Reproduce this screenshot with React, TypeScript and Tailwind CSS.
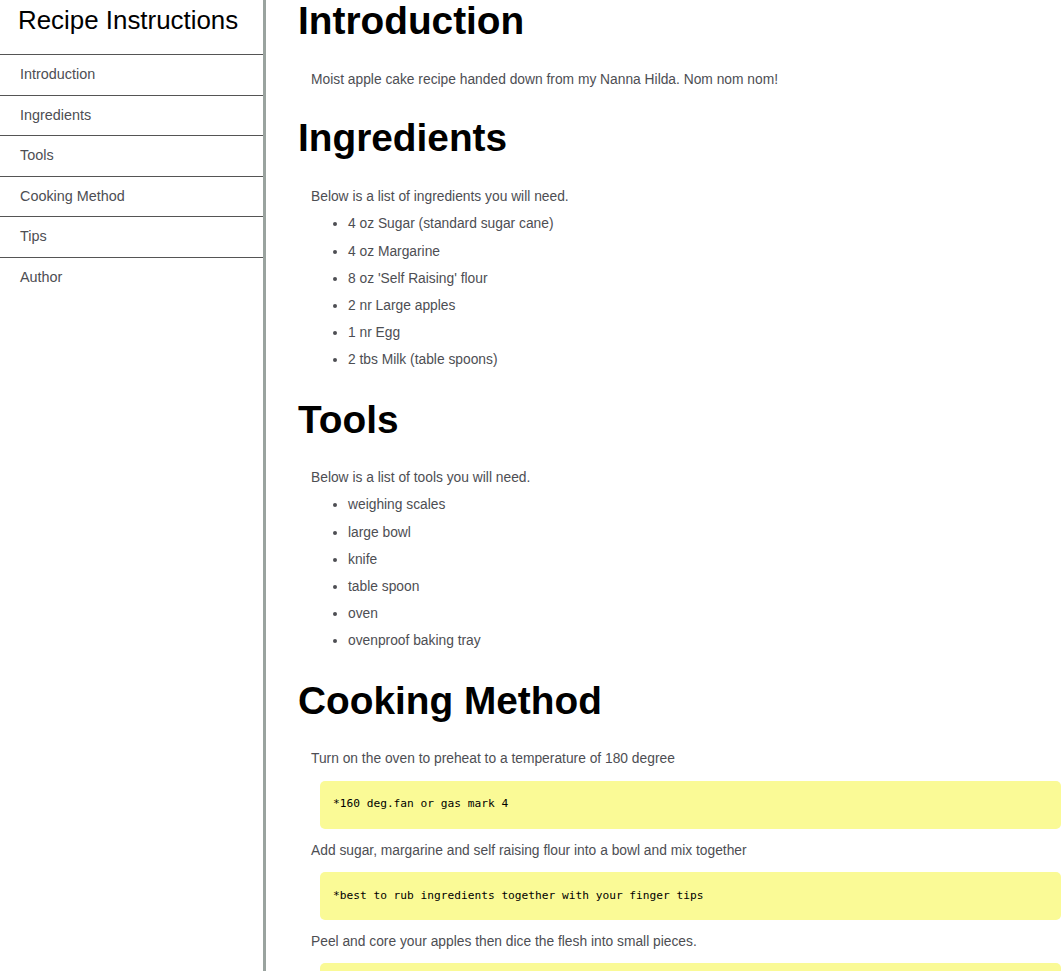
import React from 'react';

const navItems = ['Introduction', 'Ingredients', 'Tools', 'Cooking Method', 'Tips', 'Author'];

const Heading: React.FC<{ children: React.ReactNode }> = ({ children }) => (
  <h1 className="text-[38.8px] leading-[42px] font-bold text-black pl-[32px] mb-[23.5px]">{children}</h1>
);

const Para: React.FC<{ children: React.ReactNode }> = ({ children }) => (
  <p className="pl-[45px] leading-[27.4px]">{children}</p>
);

const Note: React.FC<{ children?: React.ReactNode }> = ({ children }) => (
  <div className="ml-[54px] my-[8px] rounded-[5px] bg-[#fafa96] px-[13px] h-[48px] flex items-center">
    <code className="font-['DejaVu_Sans_Mono',monospace] text-[11.2px] text-black">{children}</code>
  </div>
);

const List: React.FC<{ items: string[] }> = ({ items }) => (
  <ul className="list-disc pl-[82px] leading-[27.2px] marker:text-[#4d4e53]">
    {items.map((i) => (
      <li key={i}>{i}</li>
    ))}
  </ul>
);

const App: React.FC = () => {
  return (
    <div className="flex min-h-screen font-['Liberation_Sans',Arial,sans-serif] text-[#4d4e53] bg-white">
      <nav className="w-[266px] shrink-0 border-r-[3px] border-[#9aa39f] min-h-[971px] text-[14.4px]">
        <header className="h-[54px] pl-[18px] pt-[3px] text-[25.9px] leading-[34px] text-black">Recipe Instructions</header>
        {navItems.map((n) => (
          <a
            key={n}
            href={'#' + n}
            className="flex items-center h-[40.6px] border-t border-[#555] pl-[20px] text-[#4d4e53]"
          >
            {n}
          </a>
        ))}
      </nav>
      <main className="flex-1 min-w-0 text-[13.8px]">
        <section className="mb-[24.5px]">
          <Heading>Introduction</Heading>
          <Para>Moist apple cake recipe handed down from my Nanna Hilda. Nom nom nom!</Para>
        </section>
        <section className="mb-[25px]">
          <Heading>Ingredients</Heading>
          <Para>Below is a list of ingredients you will need.</Para>
          <List
            items={[
              '4 oz Sugar (standard sugar cane)',
              '4 oz Margarine',
              "8 oz 'Self Raising' flour",
              '2 nr Large apples',
              '1 nr Egg',
              '2 tbs Milk (table spoons)',
            ]}
          />
        </section>
        <section className="mb-[25px]">
          <Heading>Tools</Heading>
          <Para>Below is a list of tools you will need.</Para>
          <List items={['weighing scales', 'large bowl', 'knife', 'table spoon', 'oven', 'ovenproof baking tray']} />
        </section>
        <section>
          <Heading>Cooking Method</Heading>
          <Para>Turn on the oven to preheat to a temperature of 180 degree</Para>
          <Note>*160 deg.fan or gas mark 4</Note>
          <Para>Add sugar, margarine and self raising flour into a bowl and mix together</Para>
          <Note>*best to rub ingredients together with your finger tips</Note>
          <Para>Peel and core your apples then dice the flesh into small pieces.</Para>
          <Note />
        </section>
      </main>
    </div>
  );
};

export default App;
